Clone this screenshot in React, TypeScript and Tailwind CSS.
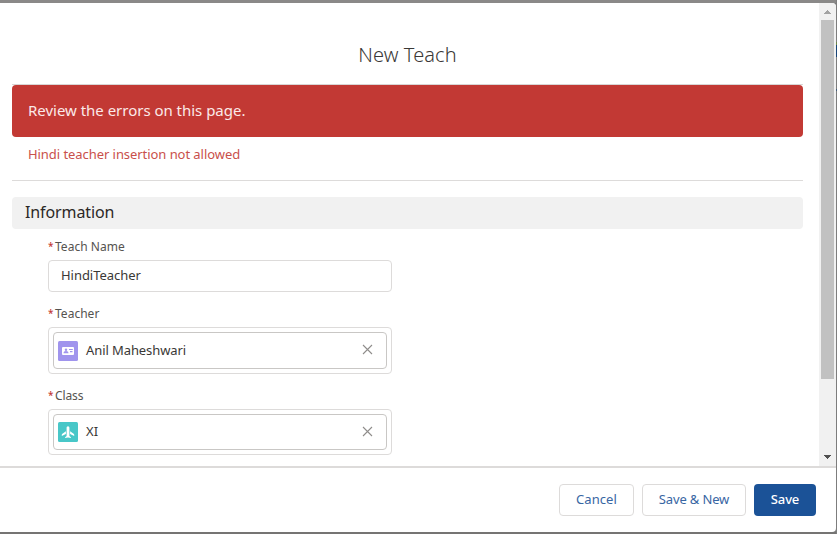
import React from "react";

function RequiredLabel({ text, tracking }: { text: string; tracking: string }) {
  return (
    <div className="flex h-[18px] items-center pb-px text-[12px] leading-[18px] text-[#55534f]">
      <span className="mb-0.5 w-[7px] text-[10px] font-medium text-[#c23934]">*</span>
      <span className={tracking}>{text}</span>
    </div>
  );
}

function CloseIcon() {
  return (
    <svg width="11" height="11" viewBox="0 0 11 11" fill="none" stroke="#8f8d8b" strokeWidth="1.1" className="mb-0.5">
      <path d="M1 1l9 9M10 1l-9 9" />
    </svg>
  );
}

function ContactIcon() {
  return (
    <svg width="20" height="20" viewBox="0 0 20 20">
      <rect width="20" height="20" rx="1.5" fill="#a094ed" />
      <rect x="4" y="6" width="12" height="8" rx="1" fill="#fff" />
      <circle cx="8" cy="8.700" r="1.200" fill="#a094ed" />
      <path d="M5.500 12.300c0-1.500 1-2.200 2.500-2.200s2.500.7 2.500 2.200zM11 8h3.800v1H11zM12 10.100h2.500v1.200H12z" fill="#a094ed" />
    </svg>
  );
}

function PlaneIcon() {
  return (
    <svg width="20" height="20" viewBox="0 0 20 20">
      <rect width="20" height="20" rx="1.5" fill="#48c7c8" />
      <path
        d="M10 4.200c-.9 0-1.400.8-1.400 1.600v8.300l-1.500 1.200v.8l2.900-.6 2.900.6v-.8l-1.500-1.200V5.800c0-.8-.5-1.600-1.400-1.600zM7.900 9.200v2.900L3.800 14v-1.200c0-.4.2-.8.6-1.100zM12.100 9.200v2.900l4.100 1.900v-1.200c0-.4-.2-.8-.6-1.100z"
        fill="#fff"
      />
    </svg>
  );
}

function Lookup({ icon, value, tracking, size }: { icon: React.ReactNode; value: string; tracking: string; size: string }) {
  return (
    <div className={`${size} w-[344px] rounded border border-[#dddbda] p-1`}>
      <div className="flex h-full items-center rounded border border-[#c9c7c5] pr-[13px] pl-1">
        {icon}
        <span className={`mb-0.5 ml-2 flex-1 text-[13px] leading-5 text-[#3a3836] ${tracking}`}>{value}</span>
        <CloseIcon />
      </div>
    </div>
  );
}

function Scrollbar() {
  return (
    <div className="flex w-[17px] shrink-0 flex-col items-center bg-[#f1f1f1]">
      <div className="flex h-[17px] items-center">
        <svg width="7" height="4" viewBox="0 0 7 4" shapeRendering="crispEdges">
          <path d="M3 0h1v1h1v1h1v1h1v1H0V3h1V2h1V1h1z" fill="#a3a3a3" />
        </svg>
      </div>
      <div className="h-[359px] w-[13px] bg-[#c1c1c1]" />
      <div className="flex flex-1 items-end pb-[7px]">
        <svg width="7" height="4" viewBox="0 0 7 4" shapeRendering="crispEdges">
          <path d="M0 0h7v1H6v1H5v1H4v1H3V3H2V2H1V1H0z" fill="#505050" />
        </svg>
      </div>
    </div>
  );
}

export default function App() {
  return (
    <div className="flex h-[534px] w-[837px] overflow-hidden bg-[#7d7d7d] font-['Noto_Sans',sans-serif]">
      <div className="flex h-full w-[836px] flex-col border-t-[3px] border-b-2 border-t-[#8a8988] border-b-[#757473]">
        <div className="flex h-[463px] overflow-hidden rounded-tr bg-white">
          <main className="flex-1 pr-4 pl-3">
            <h1 className="flex h-[81px] items-center justify-center pt-[23px] text-[20px] leading-7 font-light text-[#3a3836]">
              <span className="tracking-[0.1px]">New Teach</span>
            </h1>
            <div className="border-t border-[#d8d6d5]">
              <div className="flex h-[52px] items-center rounded bg-[#c23934] px-4 pb-px text-[15px] text-[#fbe9e8]">
                <span className="tracking-[-0.02px]">Review the errors on this page.</span>
              </div>
            </div>
            <div className="flex h-[44px] items-start border-b border-[#dddbda] px-4 pt-[7px] text-[13px] leading-5 text-[#c9504b]">
              <span className="tracking-[-0.06px]">Hindi teacher insertion not allowed</span>
            </div>
            <h2 className="mt-4 flex h-8 items-center rounded bg-[#f1f1f1] px-[13px] pb-0.5 text-[16px] text-[#2b2826]">
              <span className="tracking-[-0.1px]">Information</span>
            </h2>
            <div className="pt-[9px] pl-9">
              <RequiredLabel text="Teach Name" tracking="tracking-[0.02px]" />
              <div className="mt-1 flex h-8 w-[344px] items-center rounded border border-[#dddbda] px-3 text-[13px] text-[#3a3836]">
                <span className="tracking-[-0.04px]">HindiTeacher</span>
              </div>
              <div className="mt-[13px]">
                <RequiredLabel text="Teacher" tracking="tracking-[0.02px]" />
              </div>
              <div className="mt-1">
                <Lookup size="h-[47px]" icon={<ContactIcon />} value="Anil Maheshwari" tracking="tracking-[-0.09px]" />
              </div>
              <div className="mt-[13px]">
                <RequiredLabel text="Class" tracking="tracking-[-0.1px]" />
              </div>
              <div className="mt-1">
                <Lookup size="h-[46px]" icon={<PlaneIcon />} value="XI" tracking="tracking-[0.2px]" />
              </div>
            </div>
          </main>
          <Scrollbar />
        </div>
        <footer className="flex h-[66px] items-center justify-end gap-2 rounded-br border-t-2 border-[#dddbda] bg-white pr-5 text-[13px] text-[#3866a3]">
          <button className="h-8 w-[75px] rounded border border-[#dddbda]">
            <span className="tracking-[0.06px]">Cancel</span>
          </button>
          <button className="h-8 w-[104px] rounded border border-[#dddbda]">
            <span className="tracking-[-0.15px]">Save &amp; New</span>
          </button>
          <button className="h-8 w-[62px] rounded bg-[#1b5297] font-medium text-white">
            <span className="tracking-[-0.15px]">Save</span>
          </button>
        </footer>
      </div>
      <div className="flex w-px flex-col pt-[42px]">
        <div className="h-[3px] bg-[#6d8648]" />
        <div className="h-3 bg-[#174477]" />
        <div className="mt-8 h-[2px] bg-[#405b78]" />
      </div>
    </div>
  );
}
